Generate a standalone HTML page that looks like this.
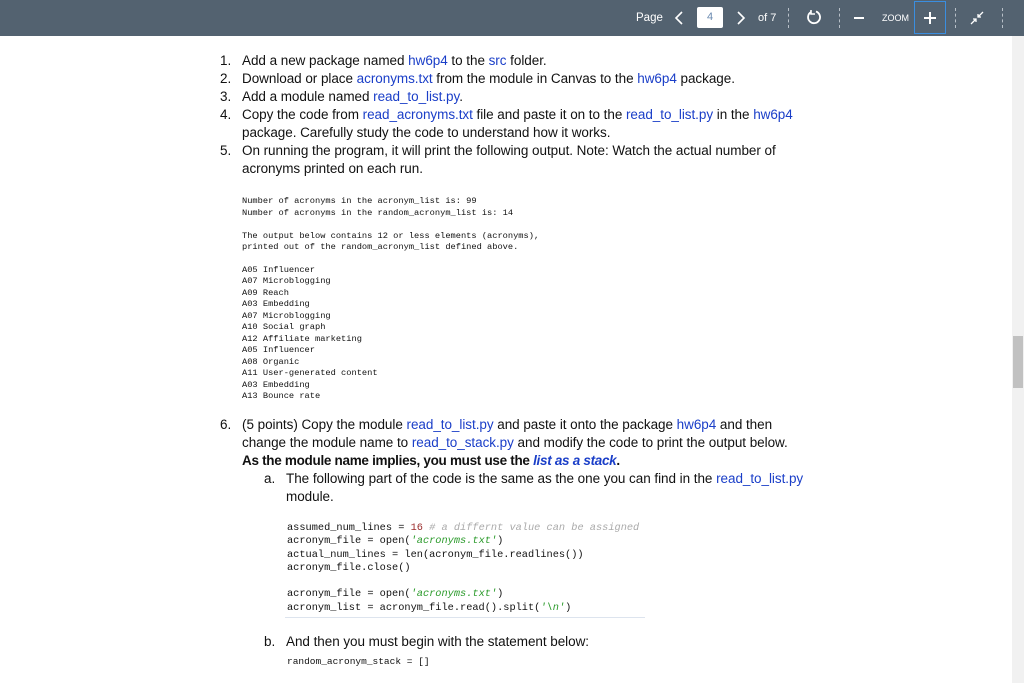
<!DOCTYPE html>
<html><head><meta charset="utf-8"><style>
body{margin:0;width:1024px;height:683px;overflow:hidden;background:#fff;font-family:"Liberation Sans",sans-serif;position:relative}
.tb{position:absolute;left:0;top:0;width:1024px;height:36px;background:#536270;color:#fff}
.tb span{position:absolute;font-size:11px}
.sep{position:absolute;top:8px;height:20px;border-left:1px dashed #b8c0c8}
.sb{position:absolute;right:0;top:36px;width:12px;height:647px;background:#f1f1f1}
.t{position:absolute;font-size:13.5px;color:#111;white-space:nowrap;letter-spacing:-0.05px}
.n{position:absolute;font-size:13.5px;color:#111}
.b{color:#1a3ec8}
.m{position:absolute;font-family:"Liberation Mono",monospace;font-size:8.7px;color:#111;white-space:pre}
.c{position:absolute;font-family:"Liberation Mono",monospace;font-size:10.3px;color:#111;white-space:pre}
.g{color:#2a9a2a;font-style:italic}.gr{color:#aaa;font-style:italic}.r{color:#9a2a2a}
</style></head><body>
<div class="tb">
<span style="left:636px;top:12px;font-size:11.5px">Page</span>
<svg style="position:absolute;left:674px;top:11px" width="10" height="14" viewBox="0 0 10 14"><path d="M8 1L2 7l6 6" fill="none" stroke="#fff" stroke-width="1.6"/></svg>
<div style="position:absolute;left:697px;top:7px;width:26px;height:21px;background:#fff;border-radius:2px;color:#6a8ab0;font-size:11px;text-align:center;line-height:21px">4</div>
<svg style="position:absolute;left:736px;top:11px" width="10" height="14" viewBox="0 0 10 14"><path d="M2 1l6 6-6 6" fill="none" stroke="#fff" stroke-width="1.6"/></svg>
<span style="left:758px;top:12px">of 7</span>
<div class="sep" style="left:788px"></div>
<svg style="position:absolute;left:806px;top:9px" width="16" height="16" viewBox="0 0 16 16"><path d="M10 2.5A6 6 0 1 1 5 3" fill="none" stroke="#fff" stroke-width="1.8"/><path d="M5 1v4H9" fill="none" stroke="#fff" stroke-width="1.6"/></svg>
<div class="sep" style="left:839px"></div>
<div style="position:absolute;left:854px;top:17px;width:10px;height:2px;background:#fff"></div>
<span style="left:882px;top:13px;font-size:9px">ZOOM</span>
<div style="position:absolute;left:914px;top:1px;width:32px;height:33px;border:1px solid #3a8ee0;box-sizing:border-box"></div>
<div style="position:absolute;left:924px;top:17px;width:12px;height:2px;background:#fff"></div>
<div style="position:absolute;left:929px;top:12px;width:2px;height:12px;background:#fff"></div>
<svg style="position:absolute;left:970px;top:11px" width="14" height="14" viewBox="0 0 14 14"><path d="M1 13L6 8M3 8h3v3M13 1L8 6M8 3v3h3" fill="none" stroke="#fff" stroke-width="1.3"/></svg>
<div class="sep" style="left:955px"></div>
<div class="sep" style="left:1002px"></div>
</div>
<div class="sb"><div style="position:absolute;left:1px;top:300px;width:10px;height:52px;background:#c1c1c1"></div></div>

<div class="n" style="left:220px;top:53px">1.</div><div class="t" style="left:242px;top:53px">Add a new package named <span class="b">hw6p4</span> to the <span class="b">src</span> folder.</div>
<div class="n" style="left:220px;top:71px">2.</div><div class="t" style="left:242px;top:71px">Download or place <span class="b">acronyms.txt</span> from the module in Canvas to the <span class="b">hw6p4</span> package.</div>
<div class="n" style="left:220px;top:89px">3.</div><div class="t" style="left:242px;top:89px">Add a module named <span class="b">read_to_list.py</span>.</div>
<div class="n" style="left:220px;top:107px">4.</div><div class="t" style="left:242px;top:107px">Copy the code from <span class="b">read_acronyms.txt</span> file and paste it on to the <span class="b">read_to_list.py</span> in the <span class="b">hw6p4</span></div>
<div class="t" style="left:242px;top:125px">package. Carefully study the code to understand how it works.</div>
<div class="n" style="left:220px;top:143px">5.</div><div class="t" style="left:242px;top:143px">On running the program, it will print the following output. Note: Watch the actual number of</div>
<div class="t" style="left:242px;top:161px">acronyms printed on each run.</div>

<div class="m" style="left:242px;top:196px;line-height:11.6px">Number of acronyms in the acronym_list is: 99
Number of acronyms in the random_acronym_list is: 14

The output below contains 12 or less elements (acronyms),
printed out of the random_acronym_list defined above.</div>
<div class="m" style="left:242px;top:265px;line-height:11.45px">A05 Influencer
A07 Microblogging
A09 Reach
A03 Embedding
A07 Microblogging
A10 Social graph
A12 Affiliate marketing
A05 Influencer
A08 Organic
A11 User-generated content
A03 Embedding
A13 Bounce rate</div>

<div class="n" style="left:220px;top:417px">6.</div><div class="t" style="left:242px;top:417px">(5 points) Copy the module <span class="b">read_to_list.py</span> and paste it onto the package <span class="b">hw6p4</span> and then</div>
<div class="t" style="left:242px;top:435px">change the module name to <span class="b">read_to_stack.py</span> and modify the code to print the output below.</div>
<div class="t" style="left:242px;top:453px;font-weight:bold;letter-spacing:-0.3px">As the module name implies, you must use the <i class="b">list as a stack</i>.</div>
<div class="n" style="left:264px;top:471px">a.</div><div class="t" style="left:286px;top:471px">The following part of the code is the same as the one you can find in the <span class="b">read_to_list.py</span></div>
<div class="t" style="left:286px;top:489px">module.</div>
<div class="c" style="left:287px;top:522px;line-height:13.3px">assumed_num_lines = <span class="r">16</span> <span class="gr"># a differnt value can be assigned</span>
acronym_file = open(<span class="g">'acronyms.txt'</span>)
actual_num_lines = len(acronym_file.readlines())
acronym_file.close()

acronym_file = open(<span class="g">'acronyms.txt'</span>)
acronym_list = acronym_file.read().split(<span class="g">'\n'</span>)</div>
<div style="position:absolute;left:285px;top:617px;width:360px;height:1px;background:#dde4ee"></div>
<div class="n" style="left:264px;top:634px">b.</div><div class="t" style="left:286px;top:634px">And then you must begin with the statement below:</div>
<div class="c" style="left:287px;top:656px;font-size:9.5px">random_acronym_stack = []</div>
</body></html>
